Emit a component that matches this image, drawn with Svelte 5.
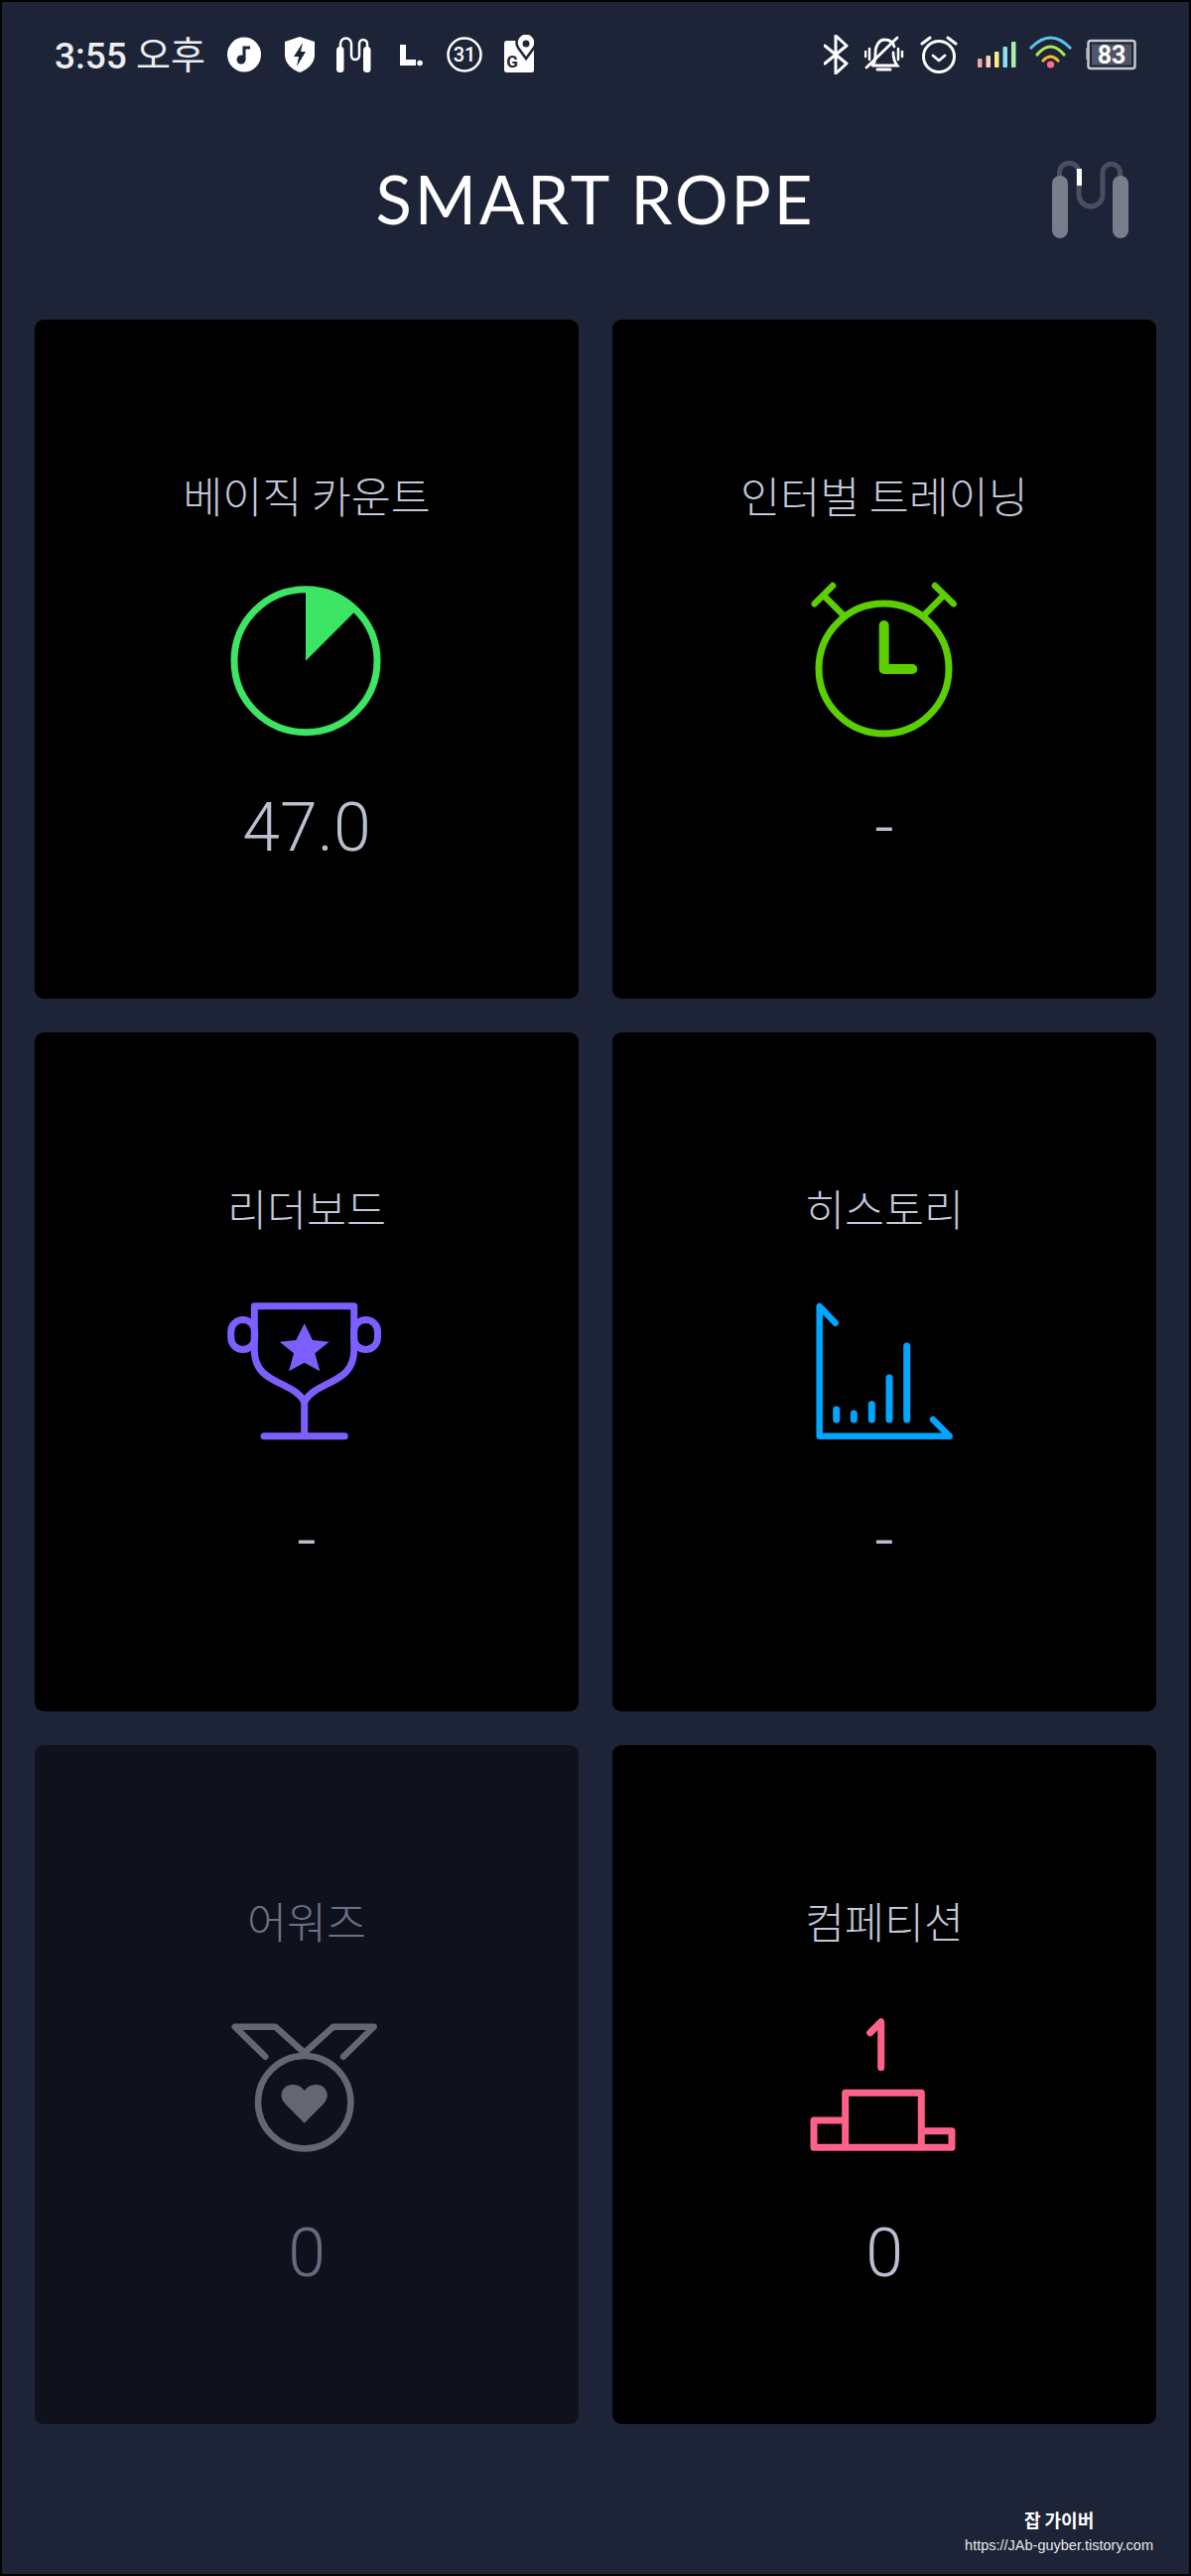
<script>
  const cards = [
    { id: "count", title: "베이직 카운트", value: "47.0" },
    { id: "interval", title: "인터벌 트레이닝", value: "-" },
    { id: "leader", title: "리더보드", value: "-" },
    { id: "history", title: "히스토리", value: "-" },
    { id: "awards", title: "어워즈", value: "0", dim: true },
    { id: "compete", title: "컴페티션", value: "0" }
  ];
  const bars = [
    [41.7, 130],
    [59.3, 134],
    [77.3, 124.7],
    [95, 98],
    [112.7, 66]
  ];
</script>

<div class="screen">
  <div class="status">
    <div class="status__left">
      <span class="time">3:55 <span class="time__ko">오후</span></span>
      <svg width="58" height="40" viewBox="0 0 58 40">
        <ellipse cx="17" cy="20" rx="17" ry="17.5" fill="#fff" />
        <circle cx="14" cy="25" r="4.5" fill="#1e2438" />
        <path d="M17 25V13h6" fill="none" stroke="#1e2438" stroke-width="3" />
      </svg>
      <svg width="52" height="40" viewBox="0 0 52 40">
        <path d="M15 2l15 5v13c0 9-7 15-15 18C7 35 0 29 0 20V7z" fill="#fff" />
        <path d="M18 8L9 22h5l-2 10 9-15h-5z" fill="#1e2438" />
      </svg>
      <svg width="63" height="40" viewBox="0 0 63 40">
        <path d="M4 14V9a5.500 5.500 0 0 1 11 0v12a4 4 0 0 0 8 0V9a3.500 3.500 0 0 1 8 0v5" fill="none" stroke="#fff" stroke-width="2.500" />
        <rect x="0" y="12" width="7.500" height="26" rx="3.500" fill="#fff" />
        <rect x="27" y="12" width="7.500" height="26" rx="3.500" fill="#fff" />
      </svg>
      <svg width="48" height="40" viewBox="0 0 48 40">
        <path d="M1 10h6v15h10v6H1z" fill="#fff" />
        <circle cx="21" cy="28.500" r="2.800" fill="#fff" />
      </svg>
      <svg width="58" height="40" viewBox="0 0 58 40">
        <circle cx="18" cy="20" r="16.500" fill="none" stroke="#fff" stroke-width="2.500" />
        <text x="18" y="27" class="status-num">31</text>
      </svg>
      <svg width="30" height="40" viewBox="0 0 30 40">
        <rect x="0" y="6" width="30" height="32" rx="2.500" fill="#fff" />
        <text x="8" y="33" class="status-g">G</text>
        <path d="M22 24l-8-11a9.500 9.500 0 1 1 16 0z" fill="#fff" stroke="#1e2438" stroke-width="2.500" />
        <circle cx="22" cy="9" r="3.500" fill="#1e2438" />
      </svg>
    </div>
    <div class="status__right">
      <svg width="41" height="40" viewBox="0 0 41 40">
        <path d="M1 11l22 18-11 10V1l11 10L1 29" fill="none" stroke="#fff" stroke-width="3" stroke-linejoin="round" stroke-linecap="round" />
      </svg>
      <svg width="56" height="40" viewBox="0 0 56 40">
        <path d="M8 31c3-3 3-7 3-13 0-7 4-13 9-13 6 0 9 3 10 7M29 18c0 6 1 9 4 13H9" fill="none" stroke="#fff" stroke-width="2.800" stroke-linecap="round" />
        <path d="M13 35h13" stroke="#fff" stroke-width="3" stroke-linecap="round" />
        <path d="M2 33L33 3" stroke="#fff" stroke-width="2.800" stroke-linecap="round" />
        <path d="M5 14v11M1 17v5M34 14v11M38 17v5" stroke="#fff" stroke-width="2.500" stroke-linecap="round" />
      </svg>
      <svg width="58" height="40" viewBox="0 0 58 40">
        <circle cx="19" cy="22" r="15.500" fill="none" stroke="#fff" stroke-width="3" />
        <path d="M13 21l6 5 6-5" fill="none" stroke="#fff" stroke-width="2.800" stroke-linecap="round" stroke-linejoin="round" />
        <path d="M2 9l8-6M36 9l-8-6" stroke="#fff" stroke-width="3" stroke-linecap="round" />
      </svg>
      <svg width="52" height="40" viewBox="0 0 52 40">
        <rect x="0" y="24" width="4.500" height="9" rx="1" fill="#f4a6ae" />
        <rect x="8.500" y="21" width="4.500" height="12" rx="1" fill="#fad2bc" />
        <rect x="17" y="17" width="4.500" height="16" rx="1" fill="#f6ec8e" />
        <rect x="25.500" y="12" width="4.500" height="21" rx="1" fill="#8edcf6" />
        <rect x="34" y="7" width="4.500" height="26" rx="1" fill="#a6efa8" />
      </svg>
      <svg width="57" height="40" viewBox="0 0 57 40">
        <g fill="none" stroke-width="3.200" stroke-linecap="round">
          <path d="M2 13Q21.500-7 41 13" stroke="#5cc3f0" />
          <path d="M8 20Q21.500 4 35 20" stroke="#a8e85c" />
          <path d="M14 26Q21.500 18 29 26" stroke="#f5b82e" />
        </g>
        <circle cx="21.500" cy="30" r="3.600" fill="#ff6b8a" />
      </svg>
      <svg width="51" height="40" viewBox="0 0 51 40">
        <rect x="0" y="13" width="2.500" height="12" rx="1" fill="#80848f" />
        <rect x="2.500" y="6" width="47" height="28" rx="2.500" fill="#1e2438" stroke="#c6c9d0" stroke-width="2.500" />
        <rect x="6" y="9.500" width="40" height="21" fill="#50556a" />
        <text x="26" y="29" class="status-batt">83</text>
      </svg>
    </div>
  </div>

  <header class="header">
    <h1 class="header__title">SMART ROPE</h1>
    <svg class="header__logo" width="100" height="100" viewBox="0 0 100 100">
      <path d="M17.500 28v-4a9.750 9.750 0 0 1 19.500 0v22a12 12 0 0 0 24 0V24a8.750 8.750 0 0 1 17.500 0v4" fill="none" stroke="#4a4f60" stroke-width="5" />
      <path d="M37.500 20v17" stroke="#fff" stroke-width="5" />
      <rect x="10" y="27" width="16" height="63" rx="8" fill="#7a7d8c" />
      <rect x="71" y="27" width="16" height="63" rx="8" fill="#7a7d8c" />
    </svg>
  </header>

  <main class="grid">
    {#each cards as card}
      <section class="card" class:card--dim={card.dim}>
        <h2 class="card__title">{card.title}</h2>
        <svg class="card__icon" width="180" height="180" viewBox="0 0 180 180" fill="none" stroke-linecap="round" stroke-linejoin="round">
          {#if card.id === "count"}
            <circle cx="89" cy="93.700" r="72" stroke="#3de564" stroke-width="7" />
            <path d="M89 93.700V21.700A72 72 0 0 1 140 42.800Z" fill="#3de564" />
          {:else if card.id === "interval"}
            <g stroke="#5ccf00">
              <circle cx="89.500" cy="101.500" r="65.500" stroke-width="7" />
              <path d="M89.700 58v44h28.600" stroke-width="10" />
              <path d="M49 48L29 28M19.700 36.300L38 18M129.700 48l20-20M141 18l18.700 18.300" stroke-width="6.500" />
            </g>
          {:else if card.id === "leader"}
            <g stroke="#7d5fff" stroke-width="7">
              <path d="M87.700 122C75 100 37.300 105 37.300 70V25.700h100.400V70c0 35-37.700 30-50 52v34.700" />
              <path d="M47 156.700h81.300" />
              <rect x="13.700" y="39.500" width="24" height="30" rx="12" />
              <rect x="137.500" y="39.500" width="24" height="30" rx="12" />
            </g>
            <path d="M87.700 43.300L96 60l16.700 1.700-14.400 11.600 5 18-15.600-8.600L72 91.300l5-18-14.300-11.600L79.300 60z" fill="#7d5fff" />
          {:else if card.id === "history"}
            <g stroke="#00a5ff">
              <path d="M40.700 42.700L24.700 26v130.700h131L139 140" stroke-width="6.500" />
              {#each bars as [x, top]}
                <path d="M{x} {top}V140" stroke-width="7" />
              {/each}
            </g>
          {:else if card.id === "awards"}
            <g stroke="#636772" stroke-width="6.500">
              <circle cx="87.700" cy="109.700" r="46.700" />
              <path d="M48.300 63.700L17.700 33.700h40.600L87.700 60l29.300-26.300h40.700L127 63.700" />
            </g>
            <path d="M87.700 130.700L69 112c-9-9-3-20 7-20 5 0 9 2 11.700 6 2.700-4 6.700-6 11.700-6 10 0 16 11 7 20z" fill="#636772" />
          {:else if card.id === "compete"}
            <g stroke="#ff6289" stroke-width="7">
              <path d="M75.700 39.700L86.700 28.700V74.700" />
              <path d="M50.700 155.300V100.300h76.600v55M50.700 128H19v27.300h139v-16.600h-30.700" />
            </g>
          {/if}
        </svg>
        <div class="card__value">{card.value}</div>
      </section>
    {/each}
  </main>

  <footer class="credit">
    <div class="credit__name">잡 가이버</div>
    <div class="credit__url">https://JAb-guyber.tistory.com</div>
  </footer>
</div>

<style>
  :global(body) {
    margin: 0;
    background: #000;
  }

  .screen {
    box-sizing: border-box;
    width: 1200px;
    height: 2595px;
    border: 2px solid #000;
    background: #1e2438;
    display: flex;
    flex-direction: column;
  }

  .status {
    display: flex;
    justify-content: space-between;
    align-items: center;
    height: 40px;
    padding: 33px 53px 0;
  }

  .status__left,
  .status__right {
    display: flex;
    align-items: center;
  }

  .time {
    width: 174px;
    color: #eceef2;
    font: 500 37px/40px Roboto, "Noto Sans CJK KR", sans-serif;
    white-space: nowrap;
  }

  .time__ko {
    font-family: "Noto Sans CJK KR", sans-serif;
    font-weight: 400;
    font-size: 38px;
  }

  .status-num {
    fill: #fff;
    font: 500 20px Roboto, sans-serif;
    text-anchor: middle;
  }

  .status-g {
    fill: #1e2438;
    font: 700 17px Roboto, sans-serif;
    text-anchor: middle;
  }

  .status-batt {
    fill: #fff;
    font: 700 25px Roboto, sans-serif;
    text-anchor: middle;
  }

  .header {
    position: relative;
    display: flex;
    justify-content: center;
    align-items: center;
    height: 247px;
  }

  .header__title {
    margin: 4px 0 0;
    color: #fff;
    font: 400 67px/1 Lato, sans-serif;
    letter-spacing: 3px;
  }

  .header__logo {
    position: absolute;
    right: 48px;
    top: 75px;
  }

  .grid {
    display: grid;
    grid-template-columns: 1fr 1fr;
    grid-auto-rows: 684px;
    gap: 34px;
    padding: 0 33px;
  }

  .card {
    display: flex;
    flex-direction: column;
    align-items: center;
    background: #000;
    border-radius: 9px;
  }

  .card--dim {
    background: #0f121c;
  }

  .card__title {
    margin: 147px 0 0;
    height: 60px;
    color: #c3c8da;
    font: 300 43.500px/60px "Noto Sans CJK KR", sans-serif;
  }

  .card--dim .card__title {
    color: #6c7286;
  }

  .card__icon {
    margin-top: 43px;
  }

  .card__value {
    margin-top: 42px;
    height: 80px;
    color: #b9bfd1;
    font: 300 68px/80px Roboto, sans-serif;
  }

  .card--dim .card__value {
    color: #666c80;
  }

  .credit {
    margin-top: 84px;
    align-self: flex-end;
    margin-right: 36px;
    color: #fff;
    text-align: center;
  }

  .credit__name {
    font: 700 18px/24px "Noto Sans CJK KR", sans-serif;
  }

  .credit__url {
    margin-top: 4px;
    color: #e8e8e8;
    font: 400 14.500px/20px "Liberation Sans", sans-serif;
  }
</style>
